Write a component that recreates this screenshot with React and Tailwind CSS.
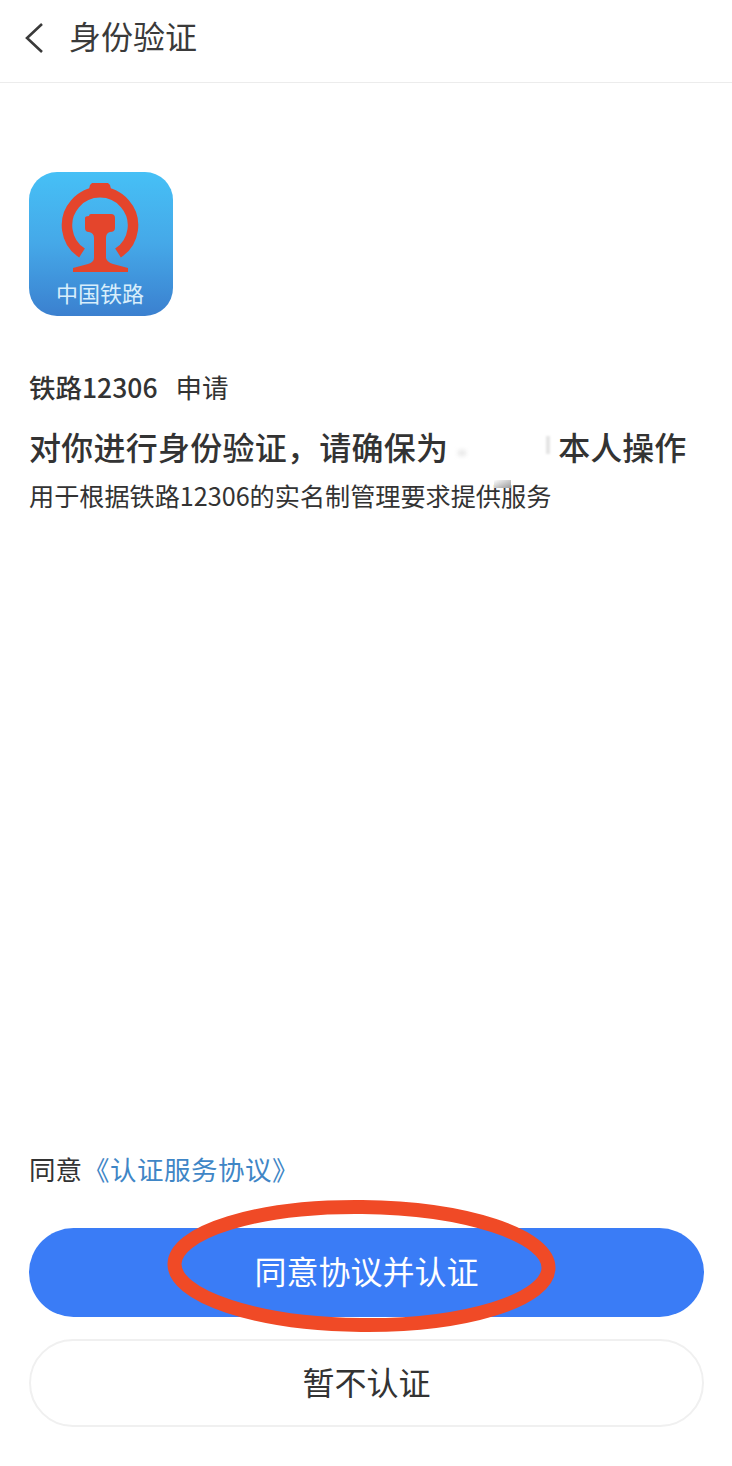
const cjk = "font-['Noto_Sans_CJK_SC','Liberation_Sans',sans-serif]"

const RailLogo = () => (
  <svg width="144" height="108" viewBox="0 0 144 108" className="block shrink-0">
    {/* ring, open at the bottom */}
    <path d="M 53 81 A 33 33 0 1 1 89 81" fill="none" stroke="#e4452c" strokeWidth="10.5" />
    <path d="M 61 13 L 63 11 L 79 11 L 81 13 L 83 21 L 59 21 Z" fill="#e4452c" />
    {/* rail section */}
    <path
      d="M 60 44 Q 60 42 62 42 L 82 42 Q 86 42 86 46 L 86 56 Q 86 60 81 60 Q 77 61 77 66 L 77 86 Q 78 90 84 92 L 99 96 L 99 100 L 44 100 L 44 96 L 59 92 Q 65 90 65 86 L 65 66 Q 65 61 60 60 Q 56 60 56 56 L 56 46 Q 56 44 60 44 Z"
      fill="#e4452c"
    />
  </svg>
)

const AppIcon = () => (
  <div className="w-[144px] h-[144px] rounded-[28px] overflow-hidden flex flex-col items-center bg-gradient-to-b from-[#46c0f6] via-[#45a8e8] to-[#3b80cf]">
    <RailLogo />
    <div className="text-[22px] leading-[26px] mt-[-1px] mr-[2px] text-[#d8eefb]">中国铁路</div>
  </div>
)

export default function App() {
  return (
    <div className={`relative w-[732px] h-[1466px] bg-white text-[#333] flex flex-col overflow-hidden ${cjk}`}>
      {/* Header */}
      <div className="h-[83px] shrink-0 border-b border-[#ececec] flex items-center pl-[24px] pb-[6px]">
        <svg width="20" height="32" viewBox="0 0 20 32" fill="none" className="shrink-0">
          <path d="M18 2 L3 16 L18 30" stroke="#3a3a3a" strokeWidth="2.6" />
        </svg>
        <span className="ml-[25px] mb-[6px] text-[32px] leading-[40px] text-[#3a3a3a]">身份验证</span>
      </div>

      {/* App info */}
      <div className="pl-[29px] pt-[89px]">
        <AppIcon />
        <div className="mt-[53px] flex items-center text-[26.5px] leading-[36px]">
          <span className="font-medium">铁路12306</span>
          <span className="ml-[18px]">申请</span>
        </div>
        <div className="mt-[21px] flex items-center text-[32px] leading-[40px] font-medium">
          <span className="tracking-[0.25px]">对你进行身份验证，请确保为</span>
          <span className="relative w-[110px] h-[40px] shrink-0">
            <span className="absolute left-[10px] top-[24px] w-[8px] h-[6px] bg-[#e8e8e8] blur-[2px]" />
            <span className="absolute right-[8px] top-[10px] w-[4px] h-[18px] bg-[#e4e4e4] blur-[1px]" />
          </span>
          <span>本人操作</span>
        </div>
        <div className="relative mt-[13px] text-[25.15px] leading-[32px]">
          用于根据铁路12306的实名制管理要求提供服务
          <span className="absolute left-[465px] top-[1px] w-[17px] h-[8px] bg-gradient-to-br from-white to-[#9a9a9a]" />
        </div>
      </div>

      {/* Agreement and actions */}
      <div className="mt-auto pb-[39px] pl-[29px] pr-[28px]">
        <div className="text-[26.5px] leading-[36px]">
          同意<span className="ml-[1px] tracking-[0.5px] text-[#3f86c6]">《认证服务协议》</span>
        </div>
        <button className="mt-[41px] w-full h-[89px] pb-[6px] rounded-full bg-[#3a7cf6] text-white text-[32px] flex items-center justify-center">
          同意协议并认证
        </button>
        <button className="mt-[22px] w-full h-[88px] pb-[4px] rounded-full border-2 border-[#f0f0f0] bg-white text-[#333] text-[32px] flex items-center justify-center">
          暂不认证
        </button>
      </div>

      {/* Red hand-drawn circle over the main button */}
      <svg width="400" height="142" viewBox="0 0 400 142" fill="none" className="absolute left-[162px] top-[1195px]">
        <ellipse cx="199.5" cy="71" rx="187" ry="59" transform="rotate(0.6 199 71)" stroke="#f04a26" strokeWidth="14" />
      </svg>
    </div>
  )
}
